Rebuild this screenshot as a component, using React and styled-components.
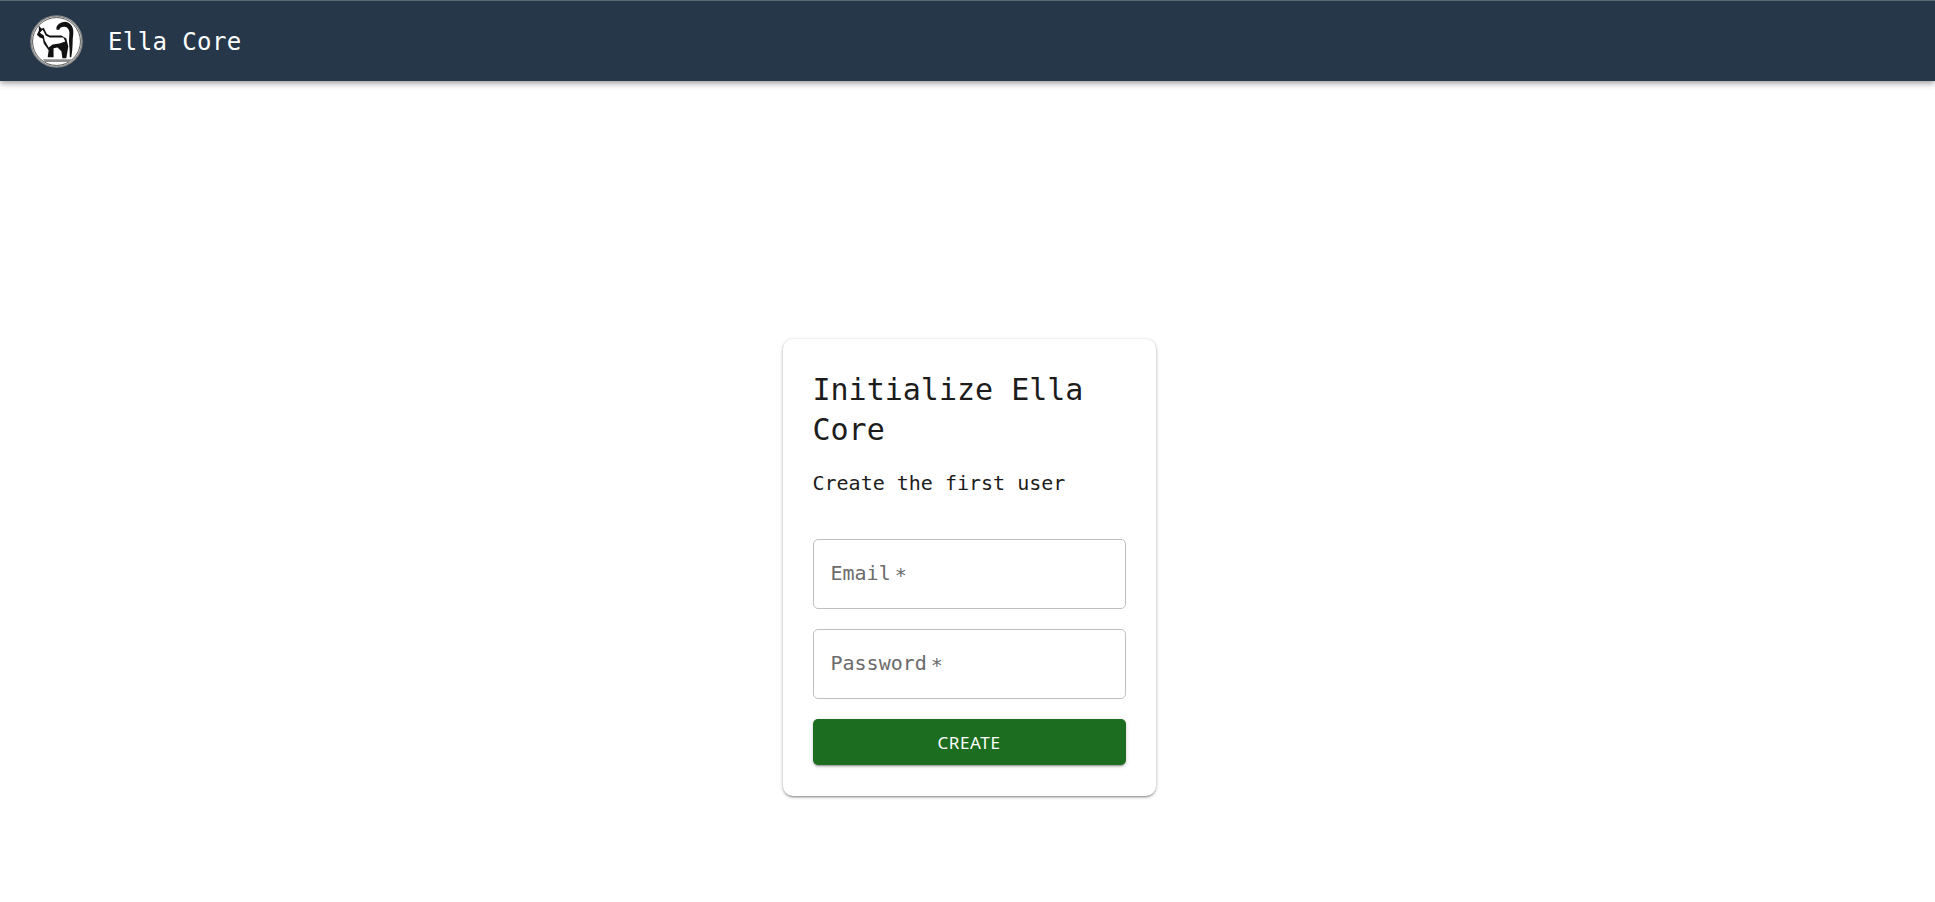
import React from 'react'
import styled, { createGlobalStyle } from 'styled-components'

const GlobalStyle = createGlobalStyle`
  html, body {
    margin: 0;
    padding: 0;
    background: #ffffff;
  }
  * {
    box-sizing: border-box;
  }
`

const Page = styled.div`
  min-height: 902px;
  display: flex;
  flex-direction: column;
  font-family: 'DejaVu Sans Mono', 'Liberation Mono', monospace;
`

const TopBar = styled.header`
  height: 81px;
  display: flex;
  align-items: center;
  gap: 25px;
  padding-left: 30px;
  color: #ffffff;
  background: #26374a;
  border-top: 1px solid #5a6a72;
  box-shadow: 0 2px 4px -1px rgba(0, 0, 0, 0.2), 0 4px 5px rgba(0, 0, 0, 0.14), 0 1px 10px rgba(0, 0, 0, 0.12);
`

const BrandName = styled.div`
  font-size: 24px;
  line-height: 32px;
  letter-spacing: 0.4px;
  padding-top: 2px;
`

const Main = styled.main`
  flex: 1;
  display: flex;
  justify-content: center;
  align-items: flex-start;
  padding: 258px 0 0 3px;
`

const Card = styled.section`
  width: 373px;
  padding: 31px 30px 31px;
  border-radius: 10px;
  background: #ffffff;
  box-shadow: 0 2px 2px -1px rgba(0, 0, 0, 0.25), 0 1px 3px rgba(0, 0, 0, 0.22), 0 1px 4px rgba(0, 0, 0, 0.12);
`

const Title = styled.h1`
  margin: 0;
  font-size: 30px;
  line-height: 40px;
  font-weight: 400;
  color: #1c1c1c;
`

const Subtitle = styled.p`
  margin: 19px 0 42px;
  font-size: 20px;
  line-height: 28px;
  color: #1c1c1c;
`

const Form = styled.form`
  display: flex;
  flex-direction: column;
  gap: 20px;
`

const Field = styled.div`
  height: 70px;
  display: flex;
  align-items: center;
  gap: 4px;
  padding: 0 17px 2px;
  border: 1px solid #c0c0c0;
  border-radius: 5px;
  font-size: 20px;
  color: #6b6b6b;
`

const Required = styled.span`
  transform: translateY(2px);
`

const SubmitButton = styled.button`
  height: 46px;
  border: 0;
  border-radius: 5px;
  color: #ffffff;
  background: #1c6d1f;
  font-family: 'Noto Sans', 'Open Sans', sans-serif;
  font-size: 17px;
  letter-spacing: 0.6px;
  box-shadow: 0 3px 1px -2px rgba(0, 0, 0, 0.2), 0 2px 2px rgba(0, 0, 0, 0.14), 0 1px 5px rgba(0, 0, 0, 0.12);
`

const Logo = () => (
  <svg width="53" height="53" viewBox="0 0 54 54">
    <circle cx="27" cy="27" r="26" fill="#ffffff" stroke="#8a8a8a" strokeWidth="1.6" />
    <circle cx="27" cy="27" r="24.4" fill="none" stroke="#222222" strokeWidth="0.8" />
    <path
      d="M7 20 L9 16 L9 11 L12 14 L14 13 L17 19 L20 21 L32 21 L37 24 L39 32 L38 38 L37 44 L33 44 L32 37 L28 33 L24 34 L24 43 L18 43 L19 36 L14 29 L13 24 L10 23 Z"
      fill="#111111"
    />
    <path d="M10 18 L13 15 L16 21 L20 23 L34 23 L36 27 L30 29 L23 30 L19 33 L15 26 L14 21 Z" fill="#ffffff" />
    <path
      d="M27 15 C26 10 32 7 36 7 C42 8 45 13 44 20 C43 27 44 33 42 43 L40.5 43 C41 35 39 28 40 21 C41 15 38 12 35 12 C32 12 30 13 30 15 Z"
      fill="#111111"
    />
    <path d="M13 45 L42 45 L40 48 L15 48 Z" fill="#8c8c8c" />
  </svg>
)

const App = () => {
  return (
    <Page>
      <GlobalStyle />
      <TopBar>
        <Logo />
        <BrandName>Ella Core</BrandName>
      </TopBar>
      <Main>
        <Card>
          <Title>Initialize Ella Core</Title>
          <Subtitle>Create the first user</Subtitle>
          <Form>
            <Field>Email<Required>*</Required></Field>
            <Field>Password<Required>*</Required></Field>
            <SubmitButton type="button">CREATE</SubmitButton>
          </Form>
        </Card>
      </Main>
    </Page>
  )
}

export default App
